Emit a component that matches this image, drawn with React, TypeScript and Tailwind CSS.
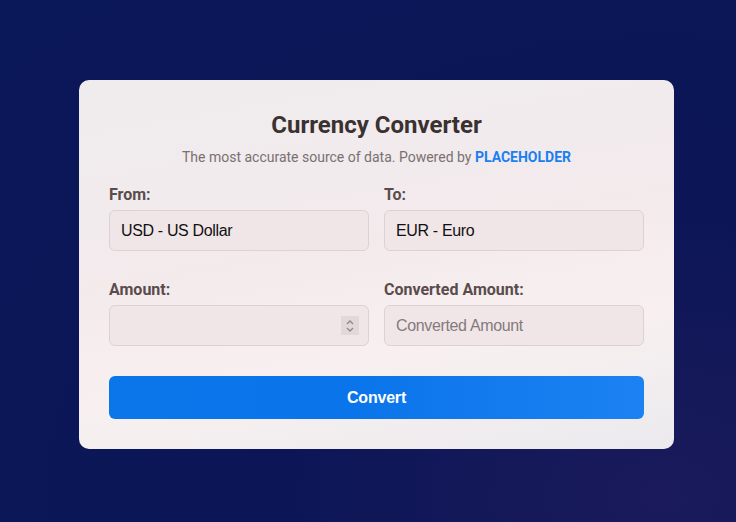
import React, { useState } from 'react';

const fieldClass =
  "w-full h-[41px] px-[11px] rounded-[6px] border border-[#dcd2d4] bg-[#f0e6e8] text-[16px] tracking-[-0.35px] text-[#111] font-['Liberation_Sans',Arial,sans-serif] outline-none appearance-none";

export default function App() {
  const [from, setFrom] = useState('USD');
  const [to, setTo] = useState('EUR');
  const [amount, setAmount] = useState('');

  return (
    <div className="w-[736px] h-[522px] overflow-hidden bg-[radial-gradient(ellipse_at_90%_95%,#1a1a5c_0%,#0c1656_40%,#0a1758_100%)] pt-[80px] pl-[79px] font-['Roboto',sans-serif]">
      <div className="w-[595px] rounded-[10px] p-[30px] bg-[linear-gradient(170deg,#efecee_0%,#f3eaec_45%,#f8f0f0_70%,#ebeaee_100%)]">
        <h2 className="text-center text-[24px] leading-[30px] font-bold text-[#3a3131]">Currency Converter</h2>
        <p className="mt-[7px] text-center text-[14px] leading-[20px] text-[#7a7070]">
          The most accurate source of data. Powered by{' '}
          <span className="font-bold text-[#1a7ff0]">PLACEHOLDER</span>
        </p>

        <div className="mt-[18px] grid grid-cols-2 gap-x-[15px]">
          <div>
            <label className="block text-[16px] leading-[20px] font-bold text-[#5a4c4c]">From:</label>
            <select
              value={from}
              onChange={(e) => setFrom(e.target.value)}
              className={`${fieldClass} mt-[5px]`}
            >
              <option value="USD">USD - US Dollar</option>
              <option value="EUR">EUR - Euro</option>
            </select>
          </div>
          <div>
            <label className="block text-[16px] leading-[20px] font-bold text-[#5a4c4c]">To:</label>
            <select
              value={to}
              onChange={(e) => setTo(e.target.value)}
              className={`${fieldClass} mt-[5px]`}
            >
              <option value="EUR">EUR - Euro</option>
              <option value="USD">USD - US Dollar</option>
            </select>
          </div>

          <div className="mt-[29px]">
            <label className="block text-[16px] leading-[20px] font-bold text-[#5a4c4c]">Amount:</label>
            <div className="relative mt-[5px]">
              <input
                type="text"
                value={amount}
                onChange={(e) => setAmount(e.target.value)}
                className={fieldClass}
              />
              <div className="absolute right-[10px] top-[11px] w-[18px] h-[19px] bg-[#e2d8da] flex flex-col items-center justify-center">
                <svg width="10" height="16" viewBox="0 0 10 16" fill="none" stroke="#8f8688" strokeWidth="1.3">
                  <path d="M2 6 L5 3 L8 6" />
                  <path d="M2 10 L5 13 L8 10" />
                </svg>
              </div>
            </div>
          </div>
          <div className="mt-[29px]">
            <label className="block text-[16px] leading-[20px] font-bold text-[#5a4c4c]">Converted Amount:</label>
            <input
              type="text"
              readOnly
              placeholder="Converted Amount"
              className={`${fieldClass} mt-[5px] placeholder:text-[#857a7b]`}
            />
          </div>
        </div>

        <button
          type="button"
          className="mt-[30px] w-full h-[43px] rounded-[6px] bg-[linear-gradient(90deg,#0b76ea_0%,#0a74ea_45%,#1c82f2_100%)] text-white text-[16px] tracking-[-0.2px] font-bold font-['Liberation_Sans',Arial,sans-serif]"
        >
          Convert
        </button>
      </div>
    </div>
  );
}
